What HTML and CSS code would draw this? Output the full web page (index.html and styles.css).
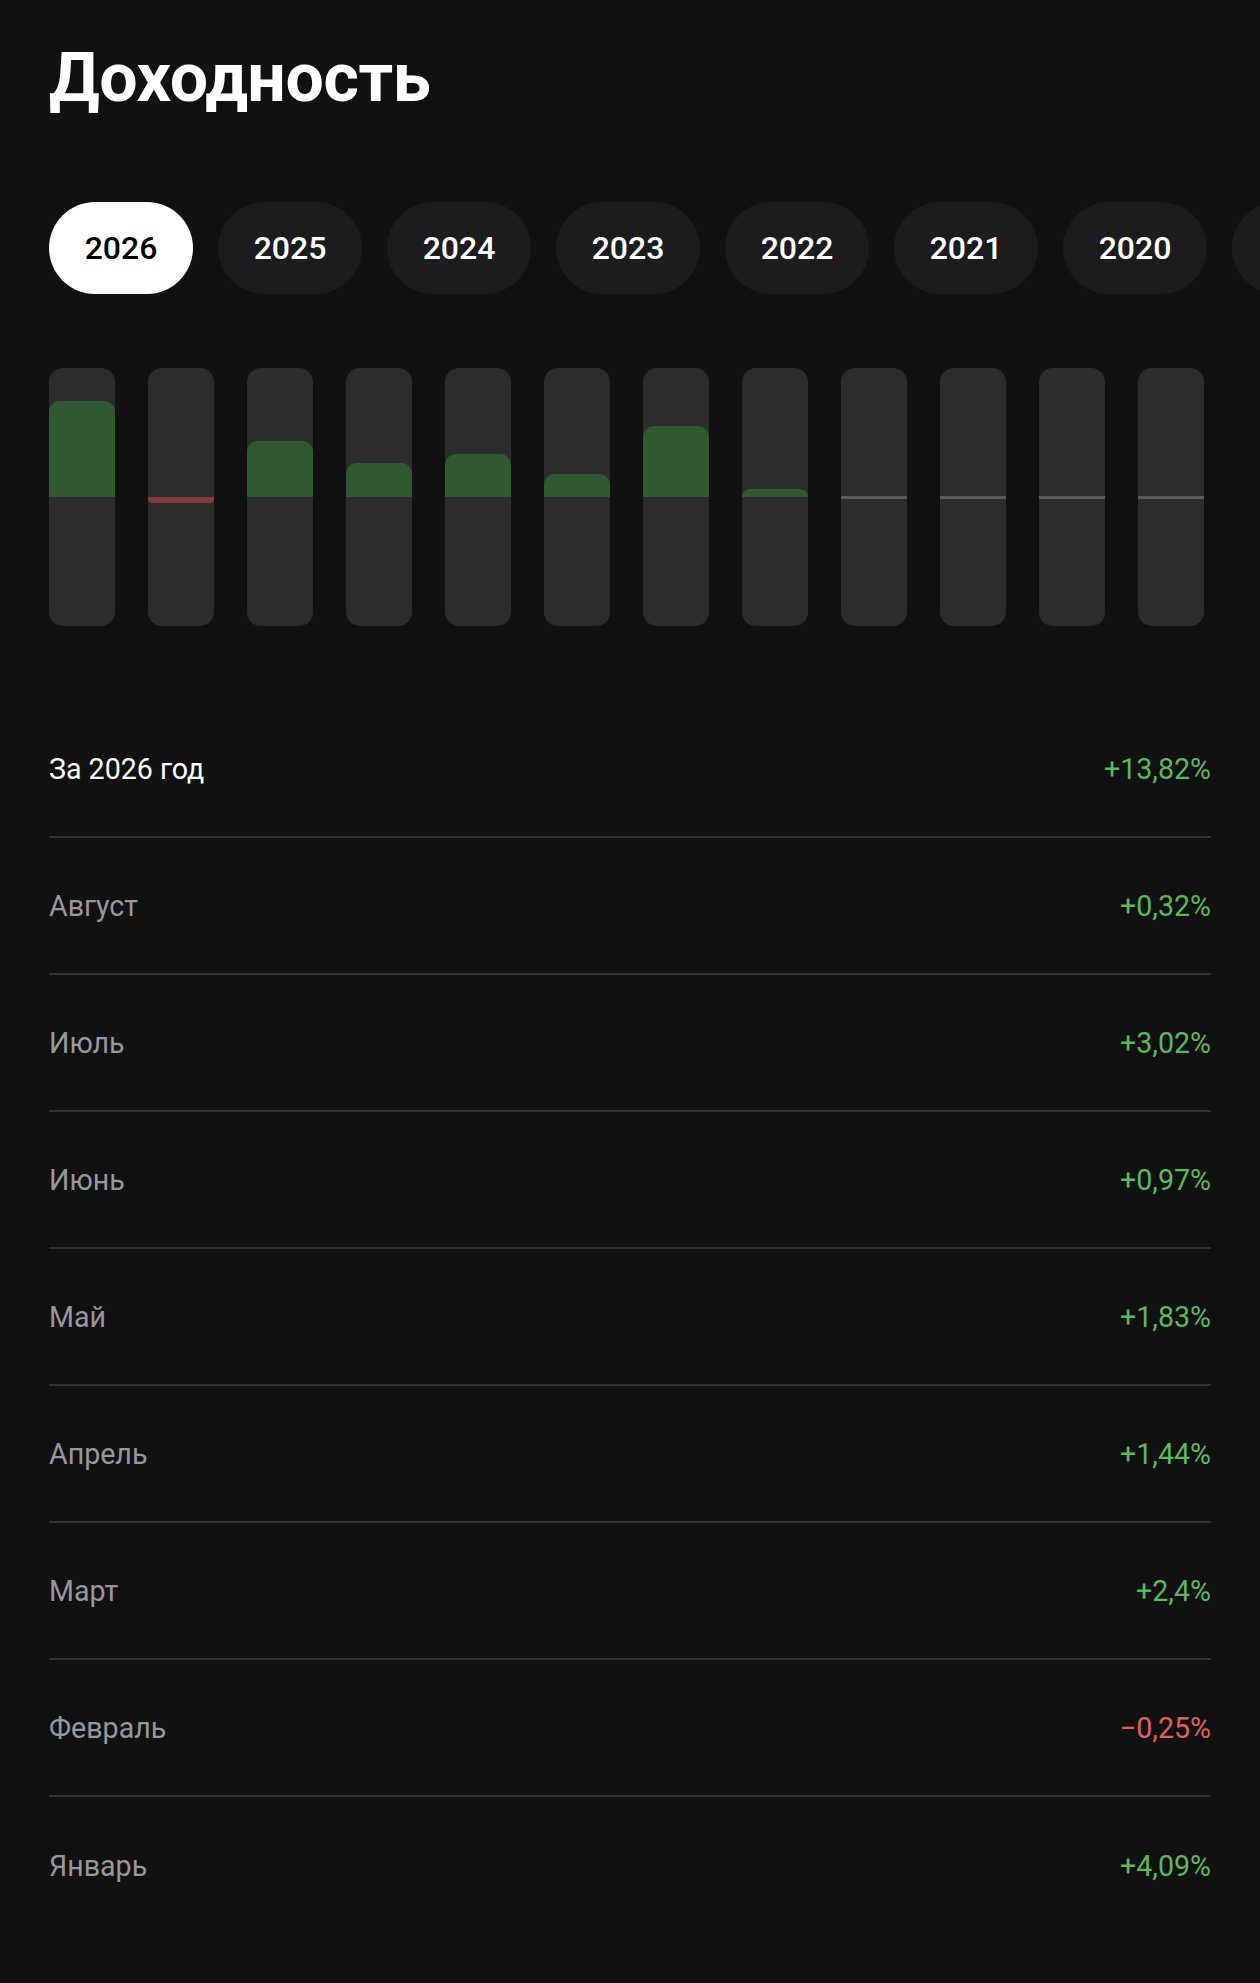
FILE: index.html
```html
<!DOCTYPE html>
<html lang="ru">
<head>
<meta charset="utf-8">
<title>Доходность</title>
<link rel="stylesheet" href="styles.css">
</head>
<body>
<main class="page">
  <h1 class="title">Доходность</h1>

  <div class="years">
    <button class="pill active">2026</button>
    <button class="pill">2025</button>
    <button class="pill">2024</button>
    <button class="pill">2023</button>
    <button class="pill">2022</button>
    <button class="pill">2021</button>
    <button class="pill">2020</button>
    <button class="pill">2019</button>
  </div>

  <div class="chart">
    <div class="bar"><div class="half pos"><div class="fill up" style="height:96px"></div></div><div class="half neg"></div></div>
    <div class="bar"><div class="half pos"></div><div class="half neg"><div class="fill down" style="height:6px"></div></div></div>
    <div class="bar"><div class="half pos"><div class="fill up" style="height:56px"></div></div><div class="half neg"></div></div>
    <div class="bar"><div class="half pos"><div class="fill up" style="height:34px"></div></div><div class="half neg"></div></div>
    <div class="bar"><div class="half pos"><div class="fill up" style="height:43px"></div></div><div class="half neg"></div></div>
    <div class="bar"><div class="half pos"><div class="fill up" style="height:23px"></div></div><div class="half neg"></div></div>
    <div class="bar"><div class="half pos"><div class="fill up" style="height:71px"></div></div><div class="half neg"></div></div>
    <div class="bar"><div class="half pos"><div class="fill up" style="height:8px"></div></div><div class="half neg"></div></div>
    <div class="bar"><div class="half pos"><div class="fill zero"></div></div><div class="half neg"><div class="fill zero"></div></div></div>
    <div class="bar"><div class="half pos"><div class="fill zero"></div></div><div class="half neg"><div class="fill zero"></div></div></div>
    <div class="bar"><div class="half pos"><div class="fill zero"></div></div><div class="half neg"><div class="fill zero"></div></div></div>
    <div class="bar"><div class="half pos"><div class="fill zero"></div></div><div class="half neg"><div class="fill zero"></div></div></div>
  </div>

  <ul class="rows">
    <li class="row total"><span class="label">За 2026 год</span><span class="value plus">+13,82%</span></li>
    <li class="row"><span class="label">Август</span><span class="value plus">+0,32%</span></li>
    <li class="row"><span class="label">Июль</span><span class="value plus">+3,02%</span></li>
    <li class="row"><span class="label">Июнь</span><span class="value plus">+0,97%</span></li>
    <li class="row"><span class="label">Май</span><span class="value plus">+1,83%</span></li>
    <li class="row"><span class="label">Апрель</span><span class="value plus">+1,44%</span></li>
    <li class="row"><span class="label">Март</span><span class="value plus">+2,4%</span></li>
    <li class="row"><span class="label">Февраль</span><span class="value minus">−0,25%</span></li>
    <li class="row"><span class="label">Январь</span><span class="value plus">+4,09%</span></li>
  </ul>
</main>
</body>
</html>
```
FILE: styles.css
```css
* { box-sizing: border-box; }

html, body {
  margin: 0;
  padding: 0;
  background: #111111;
}

body {
  font-family: Roboto, "Noto Sans", "Liberation Sans", sans-serif;
  color: #ffffff;
  overflow-x: hidden;
}

.page {
  padding: 0 49px;
  min-height: 1983px;
}

.title {
  margin: 37px 0 0;
  font-size: 68px;
  line-height: 82px;
  font-weight: 700;
  letter-spacing: -0.4px;
}

.years {
  display: flex;
  gap: 25px;
  margin: 83px -49px 0 0;
  overflow: hidden;
}

.pill {
  flex: 0 0 144px;
  height: 92px;
  border: 0;
  border-radius: 46px;
  background: #1c1c1e;
  color: #ffffff;
  font-family: Roboto, "Noto Sans", sans-serif;
  font-size: 32px;
  font-weight: 500;
  padding: 0;
  display: flex;
  align-items: center;
  justify-content: center;
}

.pill.active {
  background: #ffffff;
  color: #000000;
}

.chart {
  display: flex;
  gap: 33px;
  margin-top: 74px;
}

.bar {
  flex: 0 0 66px;
  height: 258px;
  background: #2c2c2e;
  border-radius: 14px;
  overflow: hidden;
  display: flex;
  flex-direction: column;
}

.half {
  height: 129px;
  display: flex;
  flex-direction: column;
}

.half.pos { justify-content: flex-end; }
.half.neg { justify-content: flex-start; }

.fill { width: 100%; }

.fill.up {
  background: #2f5a31;
  border-radius: 11px 11px 0 0;
}

.fill.down {
  background: #853a3c;
  border-radius: 0 0 4px 4px;
}

.fill.zero {
  height: 1.5px;
  background: #5a5a5d;
}

.rows {
  list-style: none;
  margin: 75px 0 0;
  padding: 0;
}

.row {
  display: flex;
  justify-content: space-between;
  align-items: center;
  height: 137px;
  border-bottom: 2px solid #333336;
  font-size: 28.6px;
  line-height: 34px;
}

.row:last-child { border-bottom: 0; }

.label { color: #98989d; }
.row.total .label { color: #ffffff; }

.value.plus { color: #5cb85c; }
.value.minus { color: #e0615c; }
```
